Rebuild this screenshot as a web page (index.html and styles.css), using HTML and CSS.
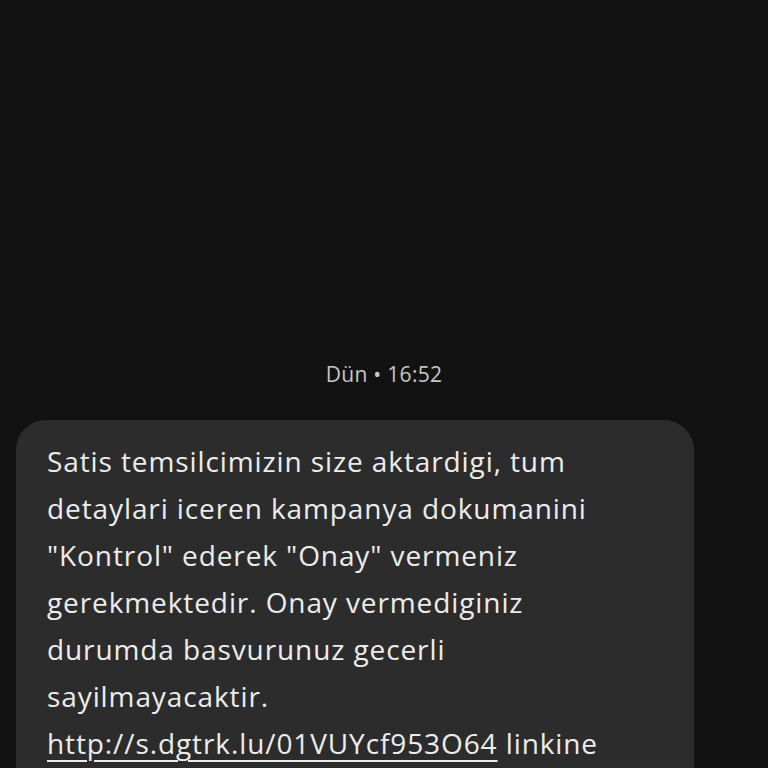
FILE: index.html
```html
<!DOCTYPE html>
<html lang="tr">
<head>
    <meta charset="UTF-8">
    <meta name="viewport" content="width=device-width, initial-scale=1.0">
    <title>Mesajlar</title>
    <link rel="stylesheet" href="styles.css">
</head>
<body>
    <div class="thread">
        <div class="timestamp">Dün • 16:52</div>
        <div class="bubble">
            Satis temsilcimizin size aktardigi, tum detaylari iceren kampanya dokumanini "Kontrol" ederek "Onay" vermeniz gerekmektedir. Onay vermediginiz durumda basvurunuz gecerli sayilmayacaktir.
            <a href="#">http://s.dgtrk.lu/01VUYcf953O64</a> linkine
        </div>
    </div>
</body>
</html>
```

FILE: styles.css
```css
body {
    margin: 0;
    background-color: #121212;
    color: #e8e8e8;
    font-family: "Open Sans", "Noto Sans", sans-serif;
    overflow: hidden;
}

.thread {
    display: flex;
    flex-direction: column;
    height: 768px;
    box-sizing: border-box;
    overflow: hidden;
    padding: 362px 0 0 16px;
}

.timestamp {
    align-self: center;
    margin-left: -16px;
    font-size: 21px;
    line-height: 24px;
    letter-spacing: 0.3px;
    color: #c6c6c6;
}

.bubble {
    flex-shrink: 0;
    margin-top: 34px;
    width: 678px;
    box-sizing: border-box;
    padding: 18px 80px 60px 31px;
    background-color: #2c2c2c;
    border-radius: 30px;
    font-size: 28px;
    line-height: 47px;
    letter-spacing: 0.9px;
    color: #ececec;
}

.bubble a {
    color: #ececec;
    text-decoration: underline;
    text-decoration-thickness: 2px;
    text-underline-offset: 6px;
}
```
